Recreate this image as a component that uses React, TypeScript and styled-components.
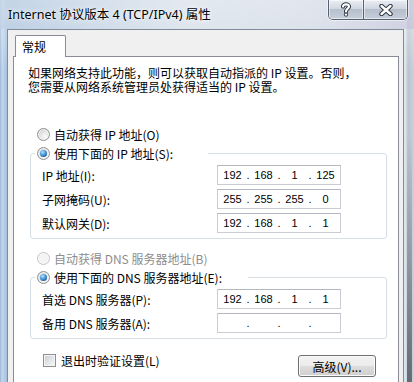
import React from 'react'
import styled, { createGlobalStyle } from 'styled-components'

const GlobalStyle = createGlobalStyle`
  html, body {
    margin: 0;
    padding: 0;
  }
  body {
    width: 414px;
    height: 382px;
    overflow: hidden;
    font-family: "Noto Sans CJK SC", sans-serif;
    font-size: 12px;
    color: #000;
  }
`

const Window = styled.div`
  width: 414px;
  height: 382px;
  display: flex;
  flex-direction: column;
  overflow: hidden;
  box-sizing: border-box;
  background:
    linear-gradient(180deg, rgba(70, 76, 86, 0) 0, rgba(70, 76, 86, 0) 35%, rgba(70, 76, 86, 0.75) 100%) right 2px top / 5px 100% no-repeat,
    linear-gradient(180deg, rgba(255, 255, 255, 0.45) 0, rgba(255, 255, 255, 0) 70px),
    linear-gradient(90deg, #98b5d7 0, #c4d7eb 2px, #b2c9e2 5px, #a5bfdc 7px, #c9d5e3 30%, #d5dce6 70%, #d8dfe8 404px, #e2e8ef 405px, #b9c3ce 408px, #c9d1db 414px);
`

const TitleBar = styled.div`
  height: 29px;
  flex: none;
  display: flex;
  justify-content: space-between;
  align-items: flex-start;
  padding-left: 8px;
  background: linear-gradient(90deg, rgba(190, 208, 228, 0.6) 0, rgba(226, 233, 241, 0.5) 45%, rgba(214, 222, 232, 0.4) 75%, rgba(190, 186, 214, 0.5) 100%);
`

const Title = styled.div`
  font-family: "Noto Sans", "Noto Sans CJK SC", sans-serif;
  font-size: 12.5px;
  line-height: 30px;
  white-space: nowrap;
  text-shadow: 0 0 6px rgba(255, 255, 255, 0.95), 0 0 2px rgba(255, 255, 255, 0.9);
`

const Caption = styled.div`
  display: flex;
  height: 20px;
  margin-right: 6px;
  box-sizing: border-box;
  border: 1px solid #56616f;
  border-top: none;
  border-radius: 0 0 5px 5px;
  overflow: hidden;
  box-shadow: 0 0 0 1px rgba(255, 255, 255, 0.5);
`

const CaptionButton = styled.div<{ $w: number }>`
  width: ${p => p.$w}px;
  display: flex;
  align-items: center;
  justify-content: center;
  background: linear-gradient(180deg, rgba(236, 240, 245, 0.9) 0, rgba(206, 214, 224, 0.85) 45%, rgba(176, 186, 200, 0.85) 50%, rgba(196, 204, 216, 0.85) 100%);
  box-shadow: inset 0 0 0 1px rgba(255, 255, 255, 0.55);
  & + & {
    border-left: 1px solid #56616f;
  }
`

const Client = styled.div`
  flex: 1;
  min-height: 0;
  margin: 0 10px 0 7px;
  display: flex;
  flex-direction: column;
  padding: 5px 4px 0 5px;
  background: #f0f0f0;
  border: 1px solid #7f8c9b;
  border-bottom: none;
`

const TabStrip = styled.div`
  height: 21px;
  flex: none;
  display: flex;
  padding-left: 2px;
`

const Tab = styled.div`
  width: 51px;
  height: 22px;
  box-sizing: border-box;
  padding-left: 6px;
  line-height: 22px;
  background: #fff;
  border: 1px solid #898c95;
  border-bottom: none;
  border-radius: 2px 2px 0 0;
  position: relative;
  z-index: 1;
`

const Panel = styled.div`
  flex: 1;
  min-height: 0;
  display: flex;
  flex-direction: column;
  padding: 9px 11px 0 16px;
  background: #fff;
  border: 1px solid #898c95;
  border-bottom: none;
`

const Description = styled.div`
  margin-left: -2px;
  line-height: 14px;
  white-space: nowrap;
`

const OptionRow = styled.label<{ $top?: number; $disabled?: boolean }>`
  display: flex;
  align-items: center;
  gap: 4px;
  height: 19px;
  margin-top: ${p => p.$top ?? 0}px;
  padding-left: 7px;
  color: ${p => (p.$disabled ? '#8d8d8d' : '#000')};
  white-space: nowrap;
`

const Radio = styled.span<{ $checked?: boolean; $disabled?: boolean }>`
  width: 13px;
  height: 13px;
  flex: none;
  box-sizing: border-box;
  border-radius: 50%;
  display: flex;
  align-items: center;
  justify-content: center;
  border: 1px solid ${p => (p.$disabled ? '#c4c4c4' : '#8e8f8f')};
  background: ${p =>
    p.$disabled
      ? '#f4f4f4'
      : 'radial-gradient(circle at 65% 70%, #fbfbfb 0, #e6e6e6 45%, #c2c2c2 100%)'};
  box-shadow: inset 0 0 0 1px ${p => (p.$disabled ? '#fafafa' : '#f4f4f4')};

  &::after {
    content: '';
    display: ${p => (p.$checked ? 'block' : 'none')};
    width: 7px;
    height: 7px;
    border-radius: 50%;
    background: radial-gradient(circle at 38% 32%, #b6e3fb 0, #5aa7e4 35%, #1f62a6 75%, #163f70 100%);
  }
`

const Check = styled.span`
  width: 13px;
  height: 13px;
  flex: none;
  box-sizing: border-box;
  border: 1px solid #8e8f8f;
  background: linear-gradient(135deg, #c6cbd2 0, #e4e6ea 55%, #f7f7f7 100%);
  box-shadow: inset 0 0 0 1px #f4f4f4;
`

const Group = styled.fieldset`
  margin: 0;
  padding: 0;
  min-width: 0;
  border: 1px solid #d5dfe5;
  border-radius: 3px;
`

const Legend = styled.legend<{ $w: number }>`
  width: ${p => p.$w}px;
  box-sizing: border-box;
  margin-left: 4px;
  padding: 0 2px;
`

const LegendOption = styled(OptionRow)`
  padding-left: 0;
`

const FieldRows = styled.div`
  display: flex;
  flex-direction: column;
  gap: 4px;
  padding: 2px 45px 5px 11px;
`

const FieldRow = styled.div`
  display: grid;
  grid-template-columns: 1fr 124px;
  align-items: center;
  height: 20px;
  white-space: nowrap;
`

const IpBox = styled.div`
  height: 20px;
  box-sizing: border-box;
  display: grid;
  grid-template-columns: 1fr 4px 1fr 4px 1fr 4px 1fr;
  align-items: center;
  padding: 0 1px;
  background: #fff;
  border: 1px solid #c9ccd2;
  border-top-color: #b3b7bf;
  font-family: "Liberation Sans", Arial, sans-serif;
  font-size: 11px;
  text-align: center;
`

const IpDot = styled.span`
  text-align: center;
`

const BottomRow = styled.div`
  display: flex;
  justify-content: space-between;
  align-items: flex-start;
  margin-top: 12px;
  padding: 0 11px 0 13px;
`

const CheckOption = styled.label`
  display: flex;
  align-items: center;
  gap: 5px;
  height: 19px;
`

const Button = styled.button`
  width: 78px;
  height: 22px;
  margin-top: 4px;
  padding: 0;
  font-family: "Noto Sans CJK SC", sans-serif;
  font-size: 12px;
  color: #000;
  border: 1px solid #707070;
  border-radius: 3px;
  background: linear-gradient(180deg, #f2f2f2 0, #ebebeb 50%, #dddddd 50%, #cfcfcf 100%);
  box-shadow: inset 0 0 0 1px #fbfbfb;
`

const HelpIcon = () => (
  <svg width="12" height="15" viewBox="0 0 12 15">
    <path d="M3 4.6 C3 1.6 9 1.6 9 4.6 C9 6.8 6 6.6 6 9.4" fill="none" stroke="#2f3640" strokeWidth="4.2" strokeLinecap="round" />
    <circle cx="6" cy="12.6" r="2.1" fill="#2f3640" />
    <path d="M3 4.6 C3 1.6 9 1.6 9 4.6 C9 6.8 6 6.6 6 9.4" fill="none" stroke="#fff" strokeWidth="2.2" strokeLinecap="round" />
    <circle cx="6" cy="12.6" r="1.2" fill="#fff" />
  </svg>
)

const CloseIcon = () => (
  <svg width="14" height="12" viewBox="0 0 14 12">
    <path d="M2.5 2 L11.5 10 M11.5 2 L2.5 10" stroke="#2f3640" strokeWidth="4.4" strokeLinecap="round" />
    <path d="M2.5 2 L11.5 10 M11.5 2 L2.5 10" stroke="#fff" strokeWidth="2.4" strokeLinecap="round" />
  </svg>
)

const IpField: React.FC<{ value?: string[] }> = ({ value }) => {
  const parts = value ?? ['', '', '', '']
  return (
    <IpBox>
      {parts.map((p, i) => (
        <React.Fragment key={i}>
          {i > 0 && <IpDot>.</IpDot>}
          <span>{p}</span>
        </React.Fragment>
      ))}
    </IpBox>
  )
}

const ipRows = [
  { label: 'IP 地址(I):', value: ['192', '168', '1', '125'] },
  { label: '子网掩码(U):', value: ['255', '255', '255', '0'] },
  { label: '默认网关(D):', value: ['192', '168', '1', '1'] },
]

const dnsRows = [
  { label: '首选 DNS 服务器(P):', value: ['192', '168', '1', '1'] },
  { label: '备用 DNS 服务器(A):', value: undefined },
]

const App: React.FC = () => {
  return (
    <>
      <GlobalStyle />
      <Window>
        <TitleBar>
          <Title>Internet 协议版本 4 (TCP/IPv4) 属性</Title>
          <Caption>
            <CaptionButton $w={34}>
              <HelpIcon />
            </CaptionButton>
            <CaptionButton $w={43}>
              <CloseIcon />
            </CaptionButton>
          </Caption>
        </TitleBar>
        <Client>
          <TabStrip>
            <Tab>常规</Tab>
          </TabStrip>
          <Panel>
            <Description>
              如果网络支持此功能，则可以获取自动指派的 IP 设置。否则，
              <br />
              您需要从网络系统管理员处获得适当的 IP 设置。
            </Description>

            <OptionRow $top={31}>
              <Radio />
              自动获得 IP 地址(O)
            </OptionRow>
            <Group>
              <Legend $w={173}>
                <LegendOption>
                  <Radio $checked />
                  使用下面的 IP 地址(S):
                </LegendOption>
              </Legend>
              <FieldRows>
                {ipRows.map(r => (
                  <FieldRow key={r.label}>
                    <span>{r.label}</span>
                    <IpField value={r.value} />
                  </FieldRow>
                ))}
              </FieldRows>
            </Group>

            <OptionRow $top={10} $disabled>
              <Radio $disabled />
              自动获得 DNS 服务器地址(B)
            </OptionRow>
            <Group>
              <Legend $w={213}>
                <LegendOption>
                  <Radio $checked />
                  使用下面的 DNS 服务器地址(E):
                </LegendOption>
              </Legend>
              <FieldRows>
                {dnsRows.map(r => (
                  <FieldRow key={r.label}>
                    <span>{r.label}</span>
                    <IpField value={r.value} />
                  </FieldRow>
                ))}
              </FieldRows>
            </Group>

            <BottomRow>
              <CheckOption>
                <Check />
                退出时验证设置(L)
              </CheckOption>
              <Button>高级(V)...</Button>
            </BottomRow>
          </Panel>
        </Client>
      </Window>
    </>
  )
}

export default App
